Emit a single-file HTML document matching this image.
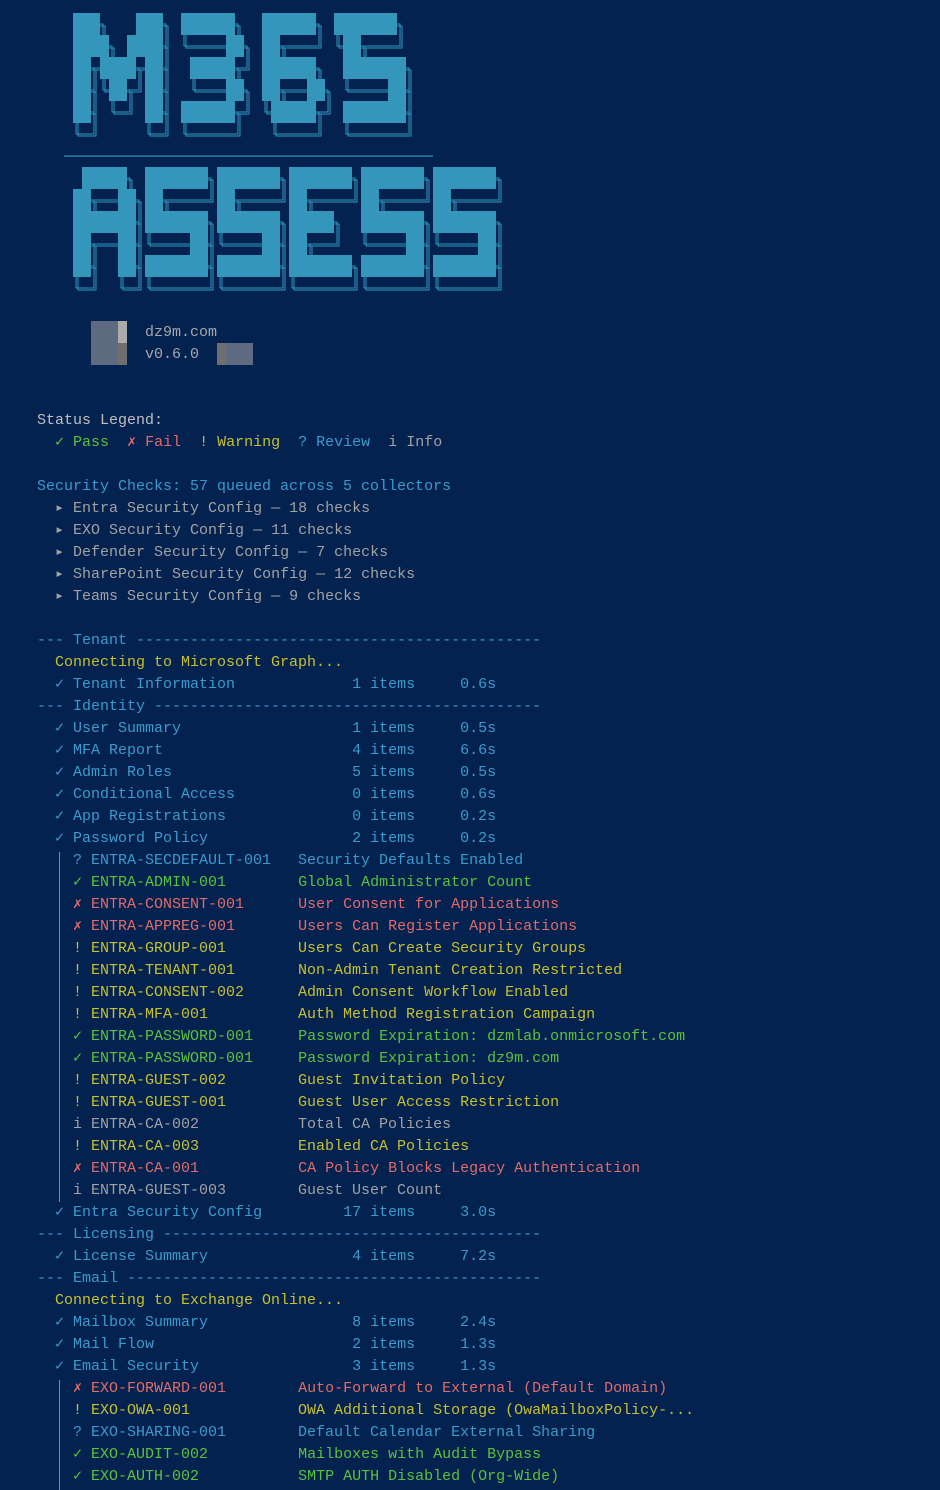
<!DOCTYPE html>
<html><head><meta charset="utf-8"><style>
html,body{margin:0;padding:0;background:#03224f;width:940px;height:1490px;overflow:hidden}
pre{position:absolute;left:37px;top:410px;margin:0;font:15px/22px "Liberation Mono","DejaVu Sans Mono",monospace;color:#bcbcbc;white-space:pre}
.c{color:#3b9bcc}.g{color:#5cc23c}.r{color:#e06b6b}.y{color:#c6c030}.d{color:#a2a2a2}.w{color:#c0c0c0}
.vl{position:absolute;left:59px;width:1px;background:#7a8aa0}
.t{position:absolute;font:15px/22px "Liberation Mono",monospace;color:#a8a8a8;white-space:pre}
#l1 rect,#l2 rect{vector-effect:non-scaling-stroke}
</style></head><body>
<svg width="940" height="380" style="position:absolute;left:0;top:0">
<defs>
<g id="l1">
<rect x="0" y="0" width="3" height="1"/><rect x="7" y="0" width="3" height="1"/>
<rect x="0" y="1" width="4" height="1"/><rect x="6" y="1" width="4" height="1"/>
<rect x="0" y="2" width="2" height="1"/><rect x="3" y="2" width="4" height="1"/><rect x="8" y="2" width="2" height="1"/>
<rect x="0" y="3" width="2" height="1"/><rect x="4" y="3" width="2" height="1"/><rect x="8" y="3" width="2" height="1"/>
<rect x="0" y="4" width="2" height="1"/><rect x="8" y="4" width="2" height="1"/>
<rect x="12" y="0" width="6" height="1"/><rect x="17" y="1" width="2" height="1"/><rect x="13" y="2" width="5" height="1"/><rect x="17" y="3" width="2" height="1"/><rect x="12" y="4" width="6" height="1"/>
<rect x="21" y="0" width="6" height="1"/><rect x="21" y="1" width="2" height="1"/><rect x="21" y="2" width="6" height="1"/><rect x="21" y="3" width="2" height="1"/><rect x="26" y="3" width="2" height="1"/><rect x="22" y="4" width="5" height="1"/>
<rect x="29" y="0" width="7" height="1"/><rect x="30" y="1" width="2" height="1"/><rect x="30" y="2" width="7" height="1"/><rect x="35" y="3" width="2" height="1"/><rect x="30" y="4" width="7" height="1"/>
</g>
<g id="l2">
<rect x="1" y="0" width="5" height="1"/><rect x="0" y="1" width="2" height="1"/><rect x="5" y="1" width="2" height="1"/><rect x="0" y="2" width="7" height="1"/><rect x="0" y="3" width="2" height="1"/><rect x="5" y="3" width="2" height="1"/><rect x="0" y="4" width="2" height="1"/><rect x="5" y="4" width="2" height="1"/>
<rect x="8" y="0" width="7" height="1"/><rect x="8" y="1" width="2" height="1"/><rect x="8" y="2" width="7" height="1"/><rect x="13" y="3" width="2" height="1"/><rect x="8" y="4" width="7" height="1"/>
<rect x="16" y="0" width="7" height="1"/><rect x="16" y="1" width="2" height="1"/><rect x="16" y="2" width="7" height="1"/><rect x="21" y="3" width="2" height="1"/><rect x="16" y="4" width="7" height="1"/>
<rect x="24" y="0" width="7" height="1"/><rect x="24" y="1" width="2" height="1"/><rect x="24" y="2" width="5" height="1"/><rect x="24" y="3" width="2" height="1"/><rect x="24" y="4" width="7" height="1"/>
<rect x="32" y="0" width="7" height="1"/><rect x="32" y="1" width="2" height="1"/><rect x="32" y="2" width="7" height="1"/><rect x="37" y="3" width="2" height="1"/><rect x="32" y="4" width="7" height="1"/>
<rect x="40" y="0" width="7" height="1"/><rect x="40" y="1" width="2" height="1"/><rect x="40" y="2" width="7" height="1"/><rect x="45" y="3" width="2" height="1"/><rect x="40" y="4" width="7" height="1"/>
</g>
</defs>
<g stroke="#3196c0" stroke-width="1" fill="none">
<use href="#l1" transform="translate(76,24) scale(9,22)"/>
<use href="#l1" transform="translate(78,26) scale(9,22)"/>
<use href="#l2" transform="translate(76,178) scale(9,22)"/>
<use href="#l2" transform="translate(78,180) scale(9,22)"/>
</g>
<use href="#l1" transform="translate(73,13) scale(9,22)" fill="#3396ba"/>
<use href="#l2" transform="translate(73,167) scale(9,22)" fill="#3396ba"/>
<rect x="64" y="155.5" width="369" height="1.2" fill="#3196c0"/>
<rect x="91" y="321" width="27" height="44" fill="#5d6a80"/>
<rect x="118" y="321" width="9" height="22" fill="#ababab"/>
<rect x="118" y="343" width="9" height="22" fill="#6f6f6f"/>
<rect x="217" y="343" width="9" height="22" fill="#6f6f6f"/>
<rect x="226" y="343" width="27" height="22" fill="#5d6a80"/>
</svg>
<div class="t" style="left:145px;top:322px">dz9m.com</div>
<div class="t" style="left:145px;top:344px">v0.6.0</div>
<div class="vl" style="top:852px;height:350px"></div>
<div class="vl" style="top:1380px;height:110px"></div>
<pre><span class="w">Status Legend:</span>
  <span class="g">✓ Pass</span>  <span class="r">✗ Fail</span>  <span class="y">! Warning</span>  <span class="c">? Review</span>  <span class="d">i Info</span>

<span class="c">Security Checks: 57 queued across 5 collectors</span>
<span class="d">  ▸ Entra Security Config — 18 checks
  ▸ EXO Security Config — 11 checks
  ▸ Defender Security Config — 7 checks
  ▸ SharePoint Security Config — 12 checks
  ▸ Teams Security Config — 9 checks</span>

<span class="c">--- Tenant ---------------------------------------------</span>
<span class="y">  Connecting to Microsoft Graph...</span>
<span class="c">  ✓ Tenant Information             1 items     0.6s
--- Identity -------------------------------------------
  ✓ User Summary                   1 items     0.5s
  ✓ MFA Report                     4 items     6.6s
  ✓ Admin Roles                    5 items     0.5s
  ✓ Conditional Access             0 items     0.6s
  ✓ App Registrations              0 items     0.2s
  ✓ Password Policy                2 items     0.2s
    ? ENTRA-SECDEFAULT-001   Security Defaults Enabled</span>
<span class="g">    ✓ ENTRA-ADMIN-001        Global Administrator Count</span>
<span class="r">    ✗ ENTRA-CONSENT-001      User Consent for Applications
    ✗ ENTRA-APPREG-001       Users Can Register Applications</span>
<span class="y">    ! ENTRA-GROUP-001        Users Can Create Security Groups
    ! ENTRA-TENANT-001       Non-Admin Tenant Creation Restricted
    ! ENTRA-CONSENT-002      Admin Consent Workflow Enabled
    ! ENTRA-MFA-001          Auth Method Registration Campaign</span>
<span class="g">    ✓ ENTRA-PASSWORD-001     Password Expiration: dzmlab.onmicrosoft.com
    ✓ ENTRA-PASSWORD-001     Password Expiration: dz9m.com</span>
<span class="y">    ! ENTRA-GUEST-002        Guest Invitation Policy
    ! ENTRA-GUEST-001        Guest User Access Restriction</span>
<span class="d">    i ENTRA-CA-002           Total CA Policies</span>
<span class="y">    ! ENTRA-CA-003           Enabled CA Policies</span>
<span class="r">    ✗ ENTRA-CA-001           CA Policy Blocks Legacy Authentication</span>
<span class="d">    i ENTRA-GUEST-003        Guest User Count</span>
<span class="c">  ✓ Entra Security Config         17 items     3.0s
--- Licensing ------------------------------------------
  ✓ License Summary                4 items     7.2s
--- Email ----------------------------------------------</span>
<span class="y">  Connecting to Exchange Online...</span>
<span class="c">  ✓ Mailbox Summary                8 items     2.4s
  ✓ Mail Flow                      2 items     1.3s
  ✓ Email Security                 3 items     1.3s</span>
<span class="r">    ✗ EXO-FORWARD-001        Auto-Forward to External (Default Domain)</span>
<span class="y">    ! EXO-OWA-001            OWA Additional Storage (OwaMailboxPolicy-...</span>
<span class="c">    ? EXO-SHARING-001        Default Calendar External Sharing</span>
<span class="g">    ✓ EXO-AUDIT-002          Mailboxes with Audit Bypass
    ✓ EXO-AUTH-002           SMTP AUTH Disabled (Org-Wide)</span></pre>
</body></html>
